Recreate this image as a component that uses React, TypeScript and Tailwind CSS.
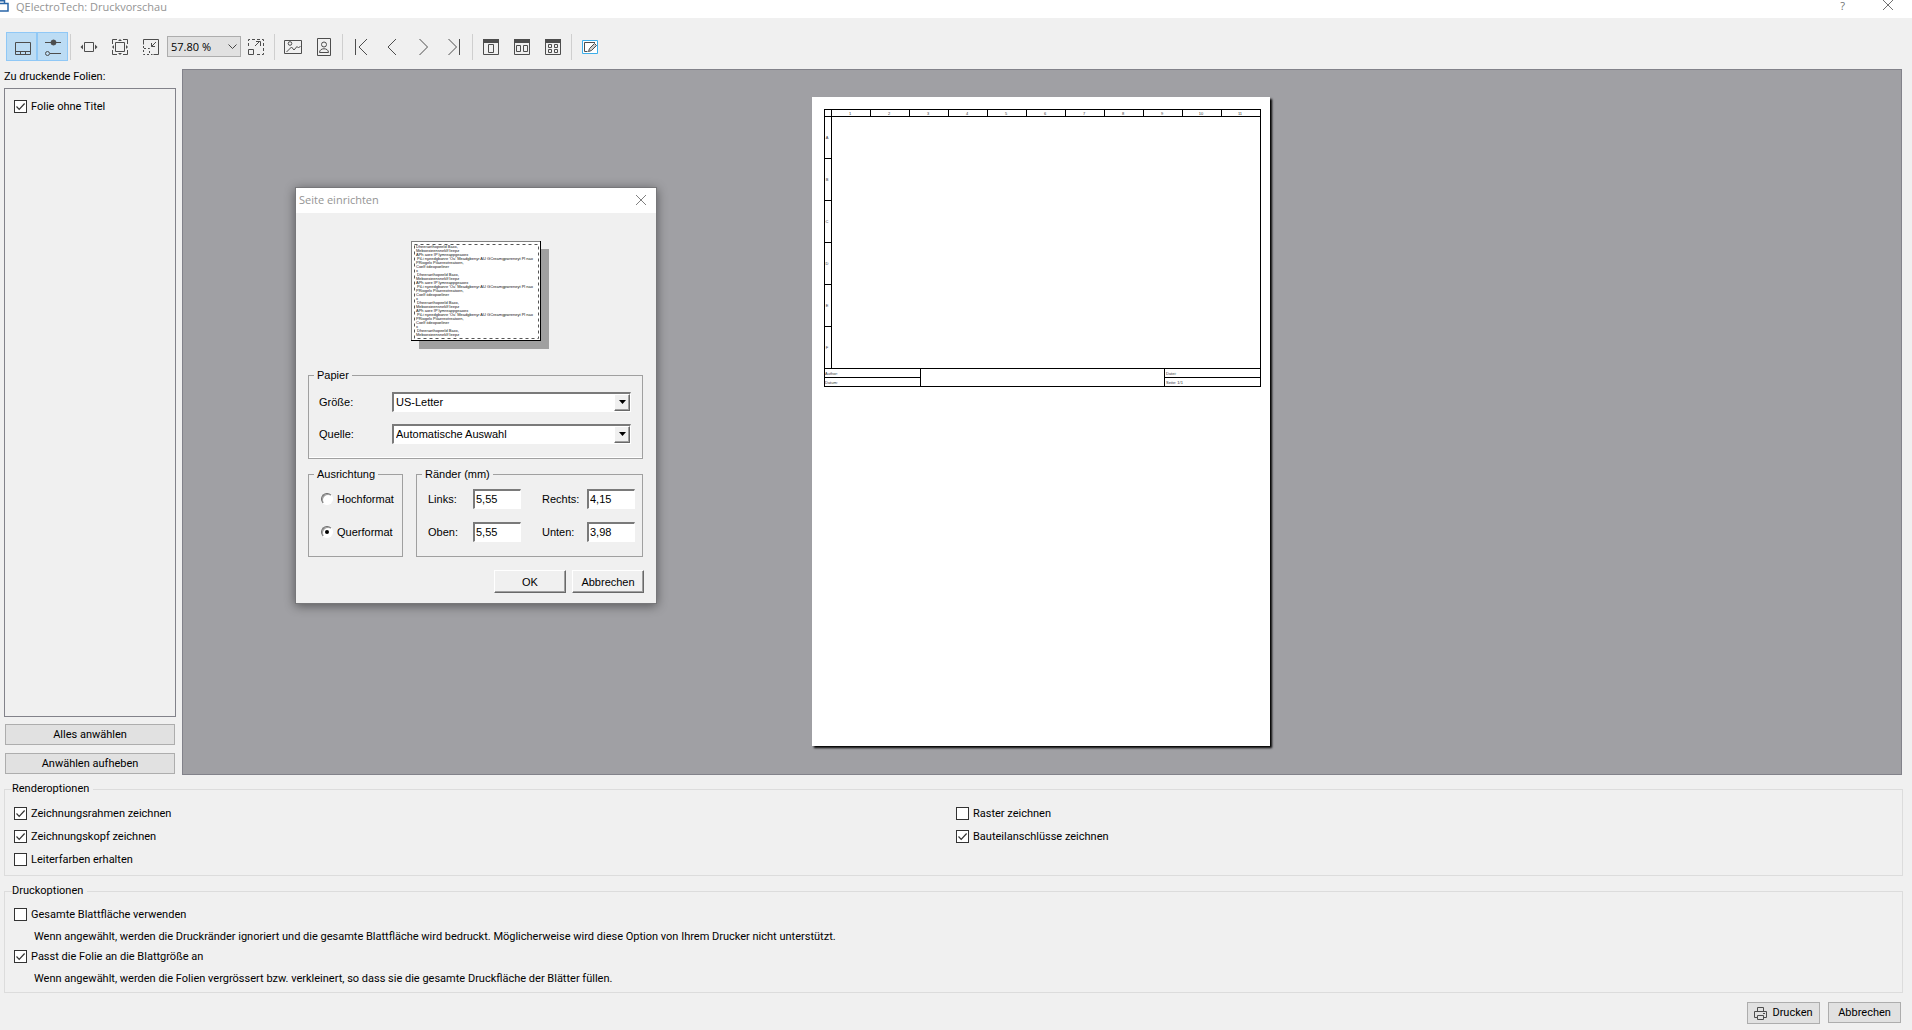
import React, { useState } from 'react';

const INK = '#4d4d4d';

function ToolIcon({ children }: { children: React.ReactNode }) {
  return (
    <svg width="31" height="29" viewBox="0 0 31 29" fill="none" stroke={INK} aria-hidden="true">
      {children}
    </svg>
  );
}

function ToolButton({ label, active, children }: { label: string; active?: boolean; children: React.ReactNode }) {
  return (
    <button
      type="button"
      aria-label={label}
      title={label}
      className={
        active
          ? 'h-[29px] w-[31px] bg-[#bcdcf4] outline outline-1 -outline-offset-1 outline-[#90c8f6]'
          : 'h-[29px] w-[31px] hover:bg-[#d8eaf9]'
      }
    >
      <ToolIcon>{children}</ToolIcon>
    </button>
  );
}

function Separator() {
  return <div className="mr-[3px] ml-[2px] h-[26px] w-px bg-[#cfcfcf]" />;
}

function CheckBox({ label, defaultChecked }: { label: string; defaultChecked?: boolean }) {
  return (
    <label className="flex h-[13px] w-fit items-center gap-1">
      <span className="relative block h-[13px] w-[13px]">
        <input
          type="checkbox"
          defaultChecked={defaultChecked}
          className="peer block h-[13px] w-[13px] appearance-none border border-[#333] bg-white"
        />
        <svg
          className="pointer-events-none absolute inset-0 hidden peer-checked:block"
          width="13"
          height="13"
          viewBox="0 0 13 13"
          fill="none"
          stroke="#333"
          strokeWidth="1.2"
          aria-hidden="true"
        >
          <path d="M2.5 6.5l2.7 2.8 5.4-5.8" />
        </svg>
      </span>
      <span className="whitespace-nowrap">{label}</span>
    </label>
  );
}

function PushButton({ className, children }: { className: string; children: React.ReactNode }) {
  return (
    <button type="button" className={'flex items-center justify-center border border-[#adadad] bg-[#e1e1e1] ' + className}>
      {children}
    </button>
  );
}

function OptionGroup({ title, className, children }: { title: string; className: string; children: React.ReactNode }) {
  return (
    <fieldset className={'mr-[9px] ml-1 border border-[#dcdcdc] pl-[9px] ' + className}>
      <legend className="-ml-[2px] pr-1 leading-4">{title}</legend>
      {children}
    </fieldset>
  );
}

const COLUMNS = ['1', '2', '3', '4', '5', '6', '7', '8', '9', '10', '11'];
const ROWS = ['A', 'B', 'C', 'D', 'E', 'F'];

function SheetDrawing() {
  return (
    <svg
      width="438"
      height="279"
      viewBox="0 0 438 279"
      fill="none"
      stroke="#000"
      className="font-['Liberation_Sans',sans-serif] text-[4px]"
      role="img"
      aria-label="Folie ohne Titel"
    >
      <rect x=".5" y=".5" width="436" height="277" />
      <path d="M0 7.5H437M7.5 0V259M0 259.5H437" />
      <path d="M0 268.5H97M341 268.5H437M96.5 259V278M340.5 259V278" />
      {COLUMNS.slice(1).map((c, i) => (
        <path key={c} d={`M${46.5 + i * 39} 0V7`} />
      ))}
      {ROWS.slice(1).map((r, i) => (
        <path key={r} d={`M0 ${49.5 + i * 42}H7`} />
      ))}
      <g fill="#333" stroke="none">
        {COLUMNS.map((c, i) => (
          <text key={c} x={26 + i * 39} y="6" textAnchor="middle">
            {c}
          </text>
        ))}
        {ROWS.map((r, i) => (
          <text key={r} x="3" y={30 + i * 42} textAnchor="middle">
            {r}
          </text>
        ))}
        <text x="1" y="266">Author:</text>
        <text x="1" y="275">Datum:</text>
        <text x="342" y="266">Datei:</text>
        <text x="342" y="275">Seite: 1/1</text>
      </g>
    </svg>
  );
}

const SAMPLE = [
  'Dheeraethopeeld Baxx,',
  'Meboexieensneklf Ieepz',
  'APh aore IP lymreappgeaoex',
  "PiLi nyeedgbanre 'Ou' Meadgbenyr AU GCreamgpwreneyt Pl nao",
  'PRiogelx Pilaereotreatoen,',
  'Coelf iideopoeliner',
  'x',
];
const SAMPLE_LINES = Array.from({ length: 23 }, (_, i) => SAMPLE[i % SAMPLE.length]);

function PaperThumbnail() {
  return (
    <svg
      width="138"
      height="108"
      viewBox="0 0 138 108"
      className="ml-[103px] block font-['Liberation_Sans',sans-serif] text-[4px]"
      role="img"
      aria-label="Seitenvorschau"
    >
      <path d="M8 8H138V108H8z" fill="#a0a0a0" />
      <path d="M0 0H130V100H0z" fill="#000" />
      <path d="M0 0H129V99H0z" fill="#808080" />
      <path d="M1 1H129V99H1z" fill="#fff" />
      <rect x="3.5" y="3.5" width="124" height="94" fill="none" stroke="#555" strokeDasharray="3 3" />
      {SAMPLE_LINES.map((line, i) => (
        <text key={i} x={i % 7 === 3 || (i % 7 === 0 && i > 0) ? 6 : 5} y={7 + i * 4} fill="#111">
          {line}
        </text>
      ))}
    </svg>
  );
}

const SUNKEN = 'border-t-2 border-l-2 border-r border-b border-t-[#7a7a7a] border-l-[#7a7a7a] border-r-white border-b-white bg-white';
const RAISED = 'border border-t-white border-l-white border-r-[#696969] border-b-[#696969] bg-[#f0f0f0] shadow-[inset_-1px_-1px_0_#a0a0a0]';

function ClassicSelect({ id, label, options }: { id: string; label: string; options: string[] }) {
  return (
    <div className="flex h-[21px] items-center">
      <label htmlFor={id} className="w-[73px]">
        {label}
      </label>
      <div className="relative flex-1">
        <select id={id} className={'block h-[20px] w-full appearance-none pl-[2px] ' + SUNKEN}>
          {options.map((o) => (
            <option key={o}>{o}</option>
          ))}
        </select>
        <span
          aria-hidden="true"
          className={'pointer-events-none absolute top-[2px] right-px flex h-[17px] w-[16px] items-center justify-center ' + RAISED}
        >
          <svg width="7" height="4" viewBox="0 0 7 4">
            <path d="M0 0H7L3.5 4z" />
          </svg>
        </span>
      </div>
    </div>
  );
}

function ClassicRadio({ label, defaultChecked, className }: { label: string; defaultChecked?: boolean; className: string }) {
  return (
    <label className={'flex h-[13px] items-center gap-1 ' + className}>
      <span className="relative block h-3 w-3">
        <input
          type="radio"
          name="ausrichtung"
          defaultChecked={defaultChecked}
          className="peer block h-3 w-3 appearance-none rounded-full border border-t-[#696969] border-r-white border-b-white border-l-[#696969] bg-white shadow-[inset_1px_1px_0_#a0a0a0]"
        />
        <span className="pointer-events-none absolute inset-1 hidden rounded-full bg-black peer-checked:block" />
      </span>
      <span>{label}</span>
    </label>
  );
}

function MarginField({ id, label, value }: { id: string; label: string; value: string }) {
  return (
    <div className="flex h-[20px] items-center">
      <label htmlFor={id} className="w-[45px]">
        {label}
      </label>
      <input id={id} defaultValue={value} className={'h-[20px] w-[48px] px-px pb-px ' + SUNKEN} />
    </div>
  );
}

function PageSetupDialog() {
  return (
    <section
      role="dialog"
      aria-labelledby="dlg-title"
      className="absolute top-[187px] left-[295px] w-[362px] border border-[#77777a] bg-[#f0f0f0] pb-[10px] font-['Liberation_Sans',Arial,sans-serif] text-[11px] leading-4 shadow-[0_2px_10px_rgba(0,0,0,0.45)]"
    >
      <header className="flex h-[25px] items-center justify-between bg-white pr-[9px] pb-[2px] pl-[3px]">
        <h2 id="dlg-title" className="font-['Open_Sans',sans-serif] text-[11px] text-[#949494]">
          Seite einrichten
        </h2>
        <button type="button" aria-label="Schließen">
          <svg width="12" height="12" viewBox="0 0 12 12" fill="none" stroke="#808080">
            <path d="M1 1L11 11M11 1L1 11" />
          </svg>
        </button>
      </header>
      <div className="pt-7 pr-[13px] pl-3">
        <PaperThumbnail />
        <fieldset className="mt-[18px] h-[92px] border border-[#a0a0a0] pt-[8px] pr-[11px] pl-[10px] shadow-[inset_0_-1px_0_#fff]">
          <legend className="-ml-[5px] px-[3px]">Papier</legend>
          <ClassicSelect id="groesse" label="Größe:" options={['US-Letter', 'A4', 'A3', 'A5']} />
          <div className="h-[11px]" />
          <ClassicSelect id="quelle" label="Quelle:" options={['Automatische Auswahl', 'Manueller Einzug']} />
        </fieldset>
        <div className="mt-[7px] flex justify-between">
          <fieldset className="h-[91px] w-[95px] border border-[#a0a0a0] pl-[12px]">
            <legend className="-ml-[7px] px-[3px]">Ausrichtung</legend>
            <ClassicRadio label="Hochformat" className="mt-[10px]" />
            <ClassicRadio label="Querformat" className="mt-[20px]" defaultChecked />
          </fieldset>
          <fieldset className="h-[91px] w-[227px] border border-[#a0a0a0] pt-[7px] pr-[7px] pl-[11px]">
            <legend className="-ml-[6px] px-[3px]">Ränder (mm)</legend>
            <div className="flex justify-between">
              <div className="flex flex-col gap-[13px]">
                <MarginField id="links" label="Links:" value="5,55" />
                <MarginField id="oben" label="Oben:" value="5,55" />
              </div>
              <div className="flex flex-col gap-[13px]">
                <MarginField id="rechts" label="Rechts:" value="4,15" />
                <MarginField id="unten" label="Unten:" value="3,98" />
              </div>
            </div>
          </fieldset>
        </div>
        <div className="mt-[13px] -mr-px flex justify-end gap-[6px]">
          <button type="button" className={'h-[23px] w-[72px] ' + RAISED}>
            OK
          </button>
          <button type="button" className={'h-[23px] w-[72px] ' + RAISED}>
            Abbrechen
          </button>
        </div>
      </div>
    </section>
  );
}

function Toolbar() {
  return (
    <div role="toolbar" aria-label="Vorschau" className="flex h-[51px] items-center pt-[6px] pl-[6px]">
      <ToolButton label="Folienliste" active>
        <path d="M9.5 10.5h15v12h-15zM9.5 19.5h15M14.5 19.5v3M19.5 19.5v3" />
      </ToolButton>
      <ToolButton label="Optionen" active>
        <path d="M8 10.5h16M13 21.5h11" />
        <circle cx="16.5" cy="10.5" r="2.5" fill={INK} />
        <circle cx="10.5" cy="21.5" r="2" />
      </ToolButton>
      <Separator />
      <ToolButton label="Breite einpassen">
        <path d="M10.5 10.5h9v9h-9z" />
        <path d="M9 12.5v5l-2.5-2.5zM21 12.5v5l2.5-2.5z" fill={INK} stroke="none" />
      </ToolButton>
      <ToolButton label="Seite einpassen">
        <path d="M10.5 10.5h9v9h-9z" />
        <path d="M7.5 12v-4.5h4.5M18 7.5h4.5v4.5M22.5 18v4.5h-4.5M12 22.5h-4.5v-4.5" />
        <path d="M13 9h4l-2-2zM13 21h4l-2 2zM9 13v4l-2-2zM21 13v4l2-2z" fill={INK} stroke="none" />
      </ToolButton>
      <ToolButton label="Verkleinern">
        <path d="M7.5 12.5v-5h15v15h-5" />
        <path d="M7.5 14v8.5h9" strokeDasharray="2 2" />
        <path d="M8 16.5h5.5v6" strokeDasharray="2 2" />
        <path d="M20 10l-4.5 4.5M15.5 11v3.5h3.5" />
      </ToolButton>
      <div className="relative">
        <select
          aria-label="Zoom"
          className="block h-[21px] w-[74px] appearance-none border border-[#adadad] bg-[#e1e1e1] pt-px pl-[3px] font-['Open_Sans',sans-serif] text-[11px] leading-[18px]"
        >
          <option>57.80 %</option>
          <option>100.00 %</option>
        </select>
        <svg
          className="pointer-events-none absolute top-[8px] right-[4px]"
          width="9"
          height="6"
          viewBox="0 0 9 6"
          fill="none"
          stroke="#444"
          aria-hidden="true"
        >
          <path d="M.5.5l4 4 4-4" />
        </svg>
      </div>
      <ToolButton label="Vergrößern">
        <path d="M7.5 14v-6.5h15v15h-8" strokeDasharray="3 2" />
        <path d="M7.5 17.5h5v5h-5z" />
        <path d="M14 14l5-5M15 9.5h4.5v4.5" />
      </ToolButton>
      <Separator />
      <ToolButton label="Querformat">
        <path d="M6.5 8.5h17v13h-17z" />
        <circle cx="12" cy="11.5" r="1.8" />
        <path d="M8.5 20l5-5 2.5 3 3-3.5 1.5 1.5 2-2" />
      </ToolButton>
      <ToolButton label="Hochformat">
        <path d="M8.5 6.5h13v17h-13z" />
        <circle cx="15" cy="12.5" r="2.5" />
        <path d="M10.5 20.5c0-5 9-5 9 0z" />
      </ToolButton>
      <Separator />
      <ToolButton label="Erste Seite">
        <path d="M9.5 7v16M21 7l-8 8 8 8" />
      </ToolButton>
      <ToolButton label="Vorherige Seite">
        <path d="M19 7l-8 8 8 8" />
      </ToolButton>
      <ToolButton label="Nächste Seite">
        <path d="M11.5 7l8 8-8 8" />
      </ToolButton>
      <ToolButton label="Letzte Seite">
        <path d="M9.5 7l8 8-8 8M20.5 7v16" />
      </ToolButton>
      <Separator />
      <ToolButton label="Einzelne Seite">
        <path d="M7.5 7.5h15v15h-15zM12.5 12.5h5v8h-5z" />
        <path d="M7 7h16v4H7z" fill={INK} stroke="none" />
      </ToolButton>
      <ToolButton label="Doppelseite">
        <path d="M7.5 7.5h15v15h-15zM9.5 13.5h4v6h-4zM16.5 13.5h4v6h-4z" />
        <path d="M7 7h16v4H7z" fill={INK} stroke="none" />
      </ToolButton>
      <ToolButton label="Alle Seiten">
        <path d="M7.5 7.5h15v15h-15zM10.5 12.5h3v3h-3zM16.5 12.5h3v3h-3zM10.5 17.5h3v3h-3zM16.5 17.5h3v3h-3z" />
        <path d="M7 7h16v4H7z" fill={INK} stroke="none" />
      </ToolButton>
      <Separator />
      <ToolButton label="Seite einrichten">
        <path d="M7.5 8.5h15v13h-15z" fill="#fff" stroke="#3daee9" />
        <path d="M20 10.5h-10.500v9h3" />
        <path d="M13.5 19.5l1-3 5-5 2 2-5 5z" fill="#ccc" />
      </ToolButton>
    </div>
  );
}

export default function App() {
  const [pages] = useState(['Folie ohne Titel']);
  return (
    <div className="relative flex min-h-screen flex-col overflow-hidden bg-[#f0f0f0] font-['Roboto',sans-serif] text-[11px] leading-4 text-black">
      <header className="flex h-[18px] items-start justify-between bg-white pr-[18px]">
        <div className="flex items-start gap-[7px]">
          <svg width="9" height="13" viewBox="0 0 9 13" fill="none" stroke="#2a66a8" strokeWidth="1.5" aria-hidden="true">
            <path d="M0 3.5h8v7.500h-8" fill="#fff" />
            <path d="M0 .8h4.500v2.700" />
          </svg>
          <h1 className="font-['Open_Sans',sans-serif] text-[11px] leading-[14px] text-[#949494]">QElectroTech: Druckvorschau</h1>
        </div>
        <div className="flex items-start gap-[37px] text-[#707070]">
          <button type="button" aria-label="Hilfe" className="font-['Open_Sans',sans-serif] text-[11px] leading-3">
            ?
          </button>
          <button type="button" aria-label="Schließen">
            <svg width="12" height="11" viewBox="0 0 12 11" fill="none" stroke="#707070">
              <path d="M1 0L11 10M11 0L1 10" />
            </svg>
          </button>
        </div>
      </header>

      <Toolbar />

      <main className="flex flex-1">
        <aside className="flex w-[182px] flex-col pl-1">
          <p className="h-[19px]">Zu druckende Folien:</p>
          <ul className="w-[172px] flex-1 border border-[#82828a] pt-[11px] pl-[9px]">
            {pages.map((p) => (
              <li key={p}>
                <CheckBox label={p} defaultChecked />
              </li>
            ))}
          </ul>
          <div className="mt-[7px] flex w-[170px] flex-col gap-2 self-start pb-px pl-px">
            <PushButton className="h-[21px] w-[170px]">Alles anwählen</PushButton>
            <PushButton className="h-[21px] w-[170px]">Anwählen aufheben</PushButton>
          </div>
        </aside>
        <section
          aria-label="Druckvorschau"
          className="mr-[10px] flex flex-1 items-center justify-center border border-[#82828a] bg-[#a0a0a4] pr-[2px] pb-[2px]"
        >
          <div className="h-[649px] w-[458px] bg-white pt-3 pl-3 shadow-[2px_2px_2px_#000]">
            <SheetDrawing />
          </div>
        </section>
      </main>

      <OptionGroup title="Renderoptionen" className="mt-[6px]">
        <div className="grid grid-cols-[942px_1fr] gap-y-[10px] pt-[10px] pb-[9px]">
          <CheckBox label="Zeichnungsrahmen zeichnen" defaultChecked />
          <CheckBox label="Raster zeichnen" />
          <CheckBox label="Zeichnungskopf zeichnen" defaultChecked />
          <CheckBox label="Bauteilanschlüsse zeichnen" defaultChecked />
          <CheckBox label="Leiterfarben erhalten" />
        </div>
      </OptionGroup>

      <OptionGroup title="Druckoptionen" className="mt-[7px]">
        <div className="pt-[9px] pb-[5px]">
          <CheckBox label="Gesamte Blattfläche verwenden" />
          <p className="mt-2 mb-[5px] pl-5">
            Wenn angewählt, werden die Druckränder ignoriert und die gesamte Blattfläche wird bedruckt. Möglicherweise wird diese
            Option von Ihrem Drucker nicht unterstützt.
          </p>
          <CheckBox label="Passt die Folie an die Blattgröße an" defaultChecked />
          <p className="mt-2 pl-5">
            Wenn angewählt, werden die Folien vergrössert bzw. verkleinert, so dass sie die gesamte Druckfläche der Blätter füllen.
          </p>
        </div>
      </OptionGroup>

      <footer className="flex items-start justify-end gap-2 pt-[9px] pr-[11px] pb-[6px]">
        <PushButton className="h-[22px] w-[73px] gap-[5px]">
          <svg width="13" height="13" viewBox="0 0 13 13" fill="none" stroke={INK} aria-hidden="true">
            <path d="M3.5 4V.5h6V4M3 10.5H.5v-6h12v6H10M3.5 8.5h6v4h-6zM9 6.5h2" />
          </svg>
          Drucken
        </PushButton>
        <PushButton className="h-[21px] w-[73px]">Abbrechen</PushButton>
      </footer>

      <PageSetupDialog />
    </div>
  );
}
